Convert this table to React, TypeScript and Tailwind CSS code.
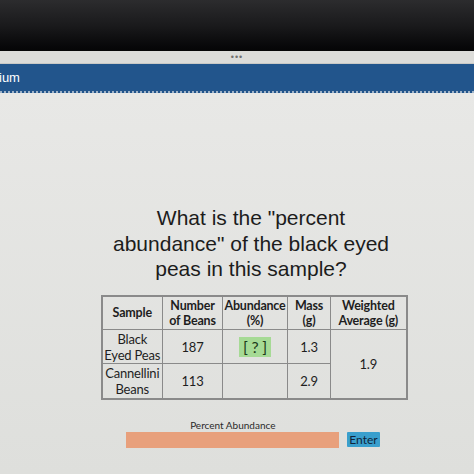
export default function App() {
  const cell = 'border border-[#8a8a8a] text-center align-middle p-0 whitespace-nowrap overflow-hidden'
  return (
    <div className="w-[474px] h-[474px] overflow-hidden flex flex-col bg-[#e3e3e1]">
      <div className="h-[51px] bg-gradient-to-b from-[#2c2c2e] via-[#1a1a1c] to-[#050506]" />
      <div className="h-[13px] bg-[#dcdcd9] flex items-center justify-center border-b border-[#c9c9c6]">
        <span className="text-[#707070] text-[9px] leading-none tracking-[1px] font-['Liberation_Sans',sans-serif]">•••</span>
      </div>
      <div className="h-[29px] bg-[#22558c] flex items-center border-b-2 border-dotted border-[#9fb3c8]">
        <span className="text-white text-[13px] font-['Liberation_Sans',sans-serif] -ml-[1px]">ium</span>
      </div>
      <div className="flex-1 flex flex-col items-center bg-gradient-to-b from-[#e8e8e6] to-[#dedfdc]">
        <h1 className="mt-[112px] ml-[28px] text-center text-[21px] leading-[25.5px] text-[#1c1c1c] font-['Liberation_Sans',sans-serif] font-normal">
          What is the "percent<br />abundance" of the black eyed<br />peas in this sample?
        </h1>
        <table className="mt-[13px] ml-[34px] table-fixed w-[305px] border-collapse border-2 border-[#8a8a8a] text-[12.5px] leading-[15px] tracking-[-0.2px] text-[#1e1e1e] font-['Lato',sans-serif]">
          <colgroup>
            <col className="w-[61px]" />
            <col className="w-[60px]" />
            <col className="w-[65px]" />
            <col className="w-[43px]" />
            <col className="w-[76px]" />
          </colgroup>
          <thead>
            <tr className="h-[34px] font-bold">
              <th className={cell}>Sample</th>
              <th className={cell}>Number<br />of Beans</th>
              <th className={cell}>Abundance<br />(%)</th>
              <th className={cell}>Mass<br />(g)</th>
              <th className={cell}>Weighted<br />Average (g)</th>
            </tr>
          </thead>
          <tbody className="text-[13px] leading-[16px]">
            <tr className="h-[34px]">
              <td className={cell}>Black<br />Eyed Peas</td>
              <td className={cell}>187</td>
              <td className={cell}>
                <span className="inline-block bg-[#a6da95] px-[4px] py-[1px] text-[16px] leading-[18px] text-[#1d3a1a]">[ ? ]</span>
              </td>
              <td className={cell}>1.3</td>
              <td className={cell} rowSpan={2}>1.9</td>
            </tr>
            <tr className="h-[35px]">
              <td className={cell}>Cannellini<br />Beans</td>
              <td className={cell}>113</td>
              <td className={cell}></td>
              <td className={cell}>2.9</td>
            </tr>
          </tbody>
        </table>
        <div className="mt-[19px] ml-[32px] flex flex-col font-['Lato',sans-serif]">
          <div className="w-[213px] text-center text-[10px] leading-[12px] text-[#2a2a2a]">Percent Abundance</div>
          <div className="mt-[1px] flex items-center gap-[8px]">
            <div className="w-[213px] h-[16px] bg-[#e8a07c]" />
            <button className="h-[15px] px-[2px] bg-[#3a9fcd] text-[#10243a] text-[12px] leading-[15px] rounded-[1px]">Enter</button>
          </div>
        </div>
      </div>
    </div>
  )
}
